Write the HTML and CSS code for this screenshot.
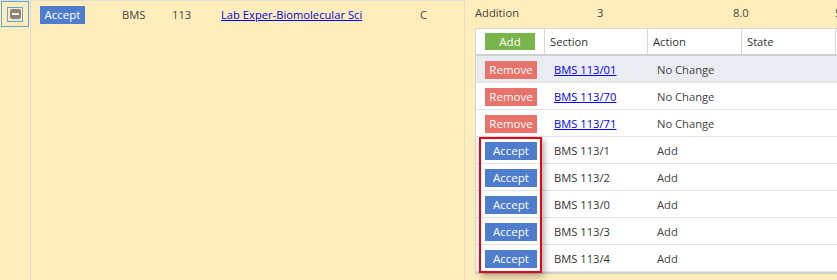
FILE: index.html
```html
<!DOCTYPE html>
<html>
<head>
<meta charset="utf-8">
<link rel="stylesheet" href="styles.css">
</head>
<body>
<div class="page">
  <div class="left">
    <div class="selcol">
      <div class="focus"><div class="chk"><div class="chk-in"><span class="minus"></span></div></div></div>
    </div>
    <div class="leftmain">
      <div class="crow">
        <span class="c-act"><span class="btn blue">Accept</span></span>
        <span class="c-subj">BMS</span>
        <span class="c-num">113</span>
        <span class="c-title"><a href="#">Lab Exper-Biomolecular Sci</a></span>
        <span class="c-cr">C</span>
      </div>
    </div>
  </div>
  <div class="right">
    <div class="summary">
      <span class="s-type">Addition</span>
      <span class="s-n">3</span>
      <span class="s-cr">8.0</span>
      <span class="s-x">5</span>
    </div>
    <div class="tablewrap">
      <div class="grid">
        <div class="hrow">
          <div class="hc h1"><span class="btn green">Add</span></div>
          <div class="hc h2">Section</div>
          <div class="hc h3">Action</div>
          <div class="hc h4">State</div>
          <div class="hc h5"></div>
        </div>
        <div class="brow hl">
          <div class="bc b1"><span class="btn red">Remove</span></div>
          <div class="bc b2"><a href="#">BMS 113/01</a></div>
          <div class="bc b3">No Change</div>
          <div class="bc b4"></div>
        </div>
        <div class="brow">
          <div class="bc b1"><span class="btn red">Remove</span></div>
          <div class="bc b2"><a href="#">BMS 113/70</a></div>
          <div class="bc b3">No Change</div>
          <div class="bc b4"></div>
        </div>
        <div class="brow">
          <div class="bc b1"><span class="btn red">Remove</span></div>
          <div class="bc b2"><a href="#">BMS 113/71</a></div>
          <div class="bc b3">No Change</div>
          <div class="bc b4"></div>
        </div>
        <div class="brow">
          <div class="bc b1"><span class="btn blue">Accept</span></div>
          <div class="bc b2">BMS 113/1</div>
          <div class="bc b3">Add</div>
          <div class="bc b4"></div>
        </div>
        <div class="brow">
          <div class="bc b1"><span class="btn blue">Accept</span></div>
          <div class="bc b2">BMS 113/2</div>
          <div class="bc b3">Add</div>
          <div class="bc b4"></div>
        </div>
        <div class="brow">
          <div class="bc b1"><span class="btn blue">Accept</span></div>
          <div class="bc b2">BMS 113/0</div>
          <div class="bc b3">Add</div>
          <div class="bc b4"></div>
        </div>
        <div class="brow">
          <div class="bc b1"><span class="btn blue">Accept</span></div>
          <div class="bc b2">BMS 113/3</div>
          <div class="bc b3">Add</div>
          <div class="bc b4"></div>
        </div>
        <div class="brow">
          <div class="bc b1"><span class="btn blue">Accept</span></div>
          <div class="bc b2">BMS 113/4</div>
          <div class="bc b3">Add</div>
          <div class="bc b4"></div>
        </div>
      </div>
      <div class="highlight"></div>
    </div>
  </div>
</div>
</body>
</html>
```

FILE: styles.css
```css
* { box-sizing: border-box; }
html, body {
  margin: 0;
  padding: 0;
  background: #ffeebb;
}
body {
  font-family: "Open Sans", "Liberation Sans", sans-serif;
  font-size: 11.2px;
  color: #333;
  width: 837px;
  height: 280px;
  overflow: hidden;
}
a { color: #0000ee; text-decoration: underline; }

.page {
  display: flex;
  width: 837px;
  height: 280px;
}

/* left panel */
.left {
  width: 465px;
  flex: none;
  display: flex;
  border-right: 1px solid #e2dccb;
  border-top: 1px solid #e4e0d4;
}
.selcol {
  width: 31px;
  flex: none;
  border-right: 1px solid #dcdad2;
  padding: 0 0 0 1px;
}
.focus {
  width: 28px;
  height: 26px;
  border: 1px solid #62a3e3;
  display: flex;
  align-items: center;
  justify-content: center;
}
.chk {
  width: 16px;
  height: 15px;
  border: 1px solid #62a3e3;
  display: flex;
  align-items: center;
  justify-content: center;
}
.chk-in {
  width: 11px;
  height: 10px;
  background: #8e8380;
  border-radius: 2px;
  display: flex;
  align-items: center;
  justify-content: center;
}
.minus {
  width: 7px;
  height: 2px;
  background: #f1ece6;
}
.leftmain { flex: 1; }
.crow {
  height: 27px;
  display: flex;
  align-items: center;
}
.c-act { margin-left: 9px; width: 82px; flex: none; }
.c-subj { width: 50px; flex: none; color: #444; }
.c-num { width: 49px; flex: none; color: #444; }
.c-title { width: 199px; flex: none; }
.c-cr { color: #444; }

.btn {
  display: inline-flex;
  align-items: center;
  justify-content: center;
  height: 18px;
  color: #fff;
  font-size: 11.5px;
  line-height: 18px;
}
.btn.blue { background: #4f7dce; width: 52px; }
.c-act .btn.blue { width: 45px; }
.btn.red { background: #e8736b; width: 52px; }
.btn.green { background: #79b54b; width: 50px; height: 17px; }

/* right panel */
.right {
  flex: 1;
  padding-left: 10px;
  min-width: 0;
  overflow: hidden;
}
.summary {
  height: 28px;
  display: flex;
  align-items: center;
  padding-bottom: 4px;
  color: #444;
  white-space: nowrap;
}
.summary span { flex: none; }
.s-type { width: 122px; }
.s-n { width: 136px; }
.s-cr { width: 102px; }
.tablewrap {
  position: relative;
  width: 380px;
}
.grid {
  border-left: 1px solid #d4d4d4;
  border-bottom: 2px solid #d0d0d0;
  background: #fff;
}
.hrow {
  display: flex;
  height: 28px;
  border-top: 1px solid #d4d4d4;
  border-bottom: 2px solid #d0d0d0;
}
.hc {
  display: flex;
  align-items: center;
  border-right: 1px solid #d8d8d8;
  padding-left: 5px;
  color: #333;
  flex: none;
}
.h1 { width: 69px; padding-left: 9px; }
.h2 { width: 103px; }
.h3 { width: 94px; }
.h4 { width: 94px; }
.h5 { flex: 1; border-right: none; }
.brow {
  display: flex;
  height: 27px;
  border-bottom: 1px solid #e3e3e3;
}
.brow.hl { background: #e9edf1; }
.bc {
  display: flex;
  align-items: center;
  padding-left: 9px;
  padding-top: 1px;
  flex: none;
}
.b1 { width: 69px; }
.b2 { width: 103px; }
.b3 { width: 94px; color: #444; }
.b4 { flex: 1; }

.highlight {
  position: absolute;
  left: 4px;
  top: 109px;
  width: 63px;
  height: 136px;
  border: 2px solid #e30613;
  box-shadow: 2px 3px 7px rgba(0, 0, 0, 0.35);
}
```
